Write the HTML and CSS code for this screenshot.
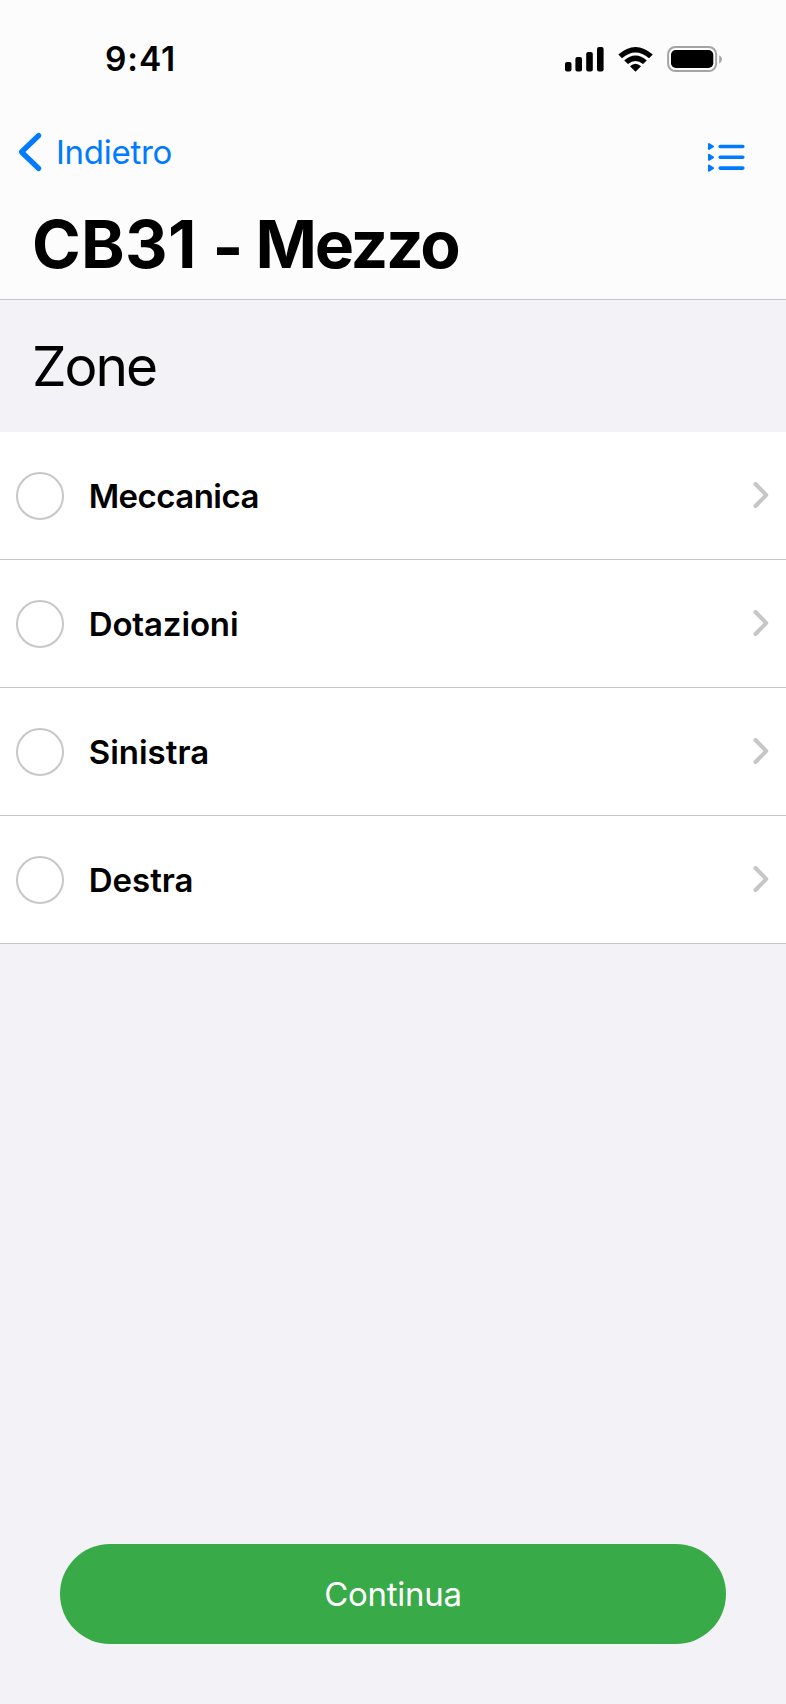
FILE: index.html
```html
<!DOCTYPE html>
<html lang="it">
<head>
<meta charset="utf-8">
<title>CB31 - Mezzo</title>
<link rel="stylesheet" href="styles.css">
</head>
<body>
<div class="screen">
  <header class="header">
    <div class="status">
      <span class="time">9:41</span>
      <svg class="indicators" width="160" height="28" viewBox="564 45 160 28">
        <rect x="565" y="62" width="6.5" height="9.5" rx="2"/>
        <rect x="575.4" y="57" width="6.6" height="14.5" rx="2"/>
        <rect x="586.2" y="52" width="6.6" height="19.5" rx="2"/>
        <rect x="597" y="47" width="6.6" height="24.5" rx="2"/>
        <path d="M618.3 54.6Q635.5 39.4 652.8 54.6L649 58.2Q635.5 46.6 622 58.2Z"/>
        <path d="M624.2 60.4Q635.5 50.4 646.8 60.4L643 64.1Q635.5 57.7 628 64.1Z"/>
        <path d="M630 66.3Q635.5 61.3 641 66.3L635.5 71.8Z"/>
        <rect class="battery-frame" x="668.1" y="46.9" width="48" height="24.2" rx="7.4"/>
        <rect x="671" y="50" width="42.3" height="18" rx="4.8"/>
        <path class="battery-tip" d="M719.2 55.2Q722 56.8 722 59.3T719.2 63.4Z"/>
      </svg>
    </div>
    <nav class="nav">
      <a class="back">
        <svg width="26" height="42" viewBox="0 0 26 42"><path d="M21.7 4.5L4.5 21L21.7 37.5"/></svg>
        <span class="back-label">Indietro</span>
      </a>
      <svg class="list-icon" width="37" height="30" viewBox="0 0 37 30">
        <path class="marks" d="M1 2L5 4.5L1 7ZM1 12.8L5 15.3L1 17.8ZM1 23.6L5 26.1L1 28.6Z"/>
        <path class="lines" d="M12.2 4.5H34.8M12.2 15.3H34.8M12.2 26.1H34.8"/>
      </svg>
    </nav>
    <h1 class="title"><span class="code">CB31</span> <span class="dash">-</span> <span class="kind">Mezzo</span></h1>
  </header>
  <main class="content">
    <h2 class="section-title">Zone</h2>
    <ul class="zones">
      <li class="zone"><span class="radio"></span><span class="label meccanica">Meccanica</span><svg class="chevron" width="18" height="28" viewBox="0 0 18 28"><path d="M3.5 3L14.2 14L3.5 25"/></svg></li>
      <li class="zone"><span class="radio"></span><span class="label dotazioni">Dotazioni</span><svg class="chevron" width="18" height="28" viewBox="0 0 18 28"><path d="M3.5 3L14.2 14L3.5 25"/></svg></li>
      <li class="zone"><span class="radio"></span><span class="label">Sinistra</span><svg class="chevron" width="18" height="28" viewBox="0 0 18 28"><path d="M3.5 3L14.2 14L3.5 25"/></svg></li>
      <li class="zone"><span class="radio"></span><span class="label">Destra</span><svg class="chevron" width="18" height="28" viewBox="0 0 18 28"><path d="M3.5 3L14.2 14L3.5 25"/></svg></li>
    </ul>
  </main>
  <footer class="footer"><button class="continue">Continua</button></footer>
</div>
</body>
</html>
```
FILE: styles.css
```css
* { box-sizing: border-box; }
body { margin: 0; font-family: Inter, "Liberation Sans", sans-serif; color: #000; }
.screen { width: 786px; height: 1704px; display: flex; flex-direction: column; background: #f2f2f7; }
.header { height: 300px; background: #fcfcfc; border-bottom: 1px solid #c6c6c8; }
.status { height: 118px; padding: 0 62px 0 105px; display: flex; align-items: center; justify-content: space-between; }
.time { font-size: 33.5px; font-weight: 600; line-height: 40px; letter-spacing: 0.9px; }
.battery-frame { fill: none; stroke: #a4a4a4; stroke-width: 2; }
.battery-tip { fill: #a4a4a4; }
.nav { height: 68px; padding: 0 41px 0 17px; display: flex; align-items: center; justify-content: space-between; }
.back { display: flex; align-items: center; gap: 13px; color: #007aff; }
.back svg { fill: none; stroke: #007aff; stroke-width: 5.2; stroke-linecap: round; stroke-linejoin: round; }
.back-label { font-size: 33px; line-height: 40px; letter-spacing: -0.27px; }
.list-icon { margin-top: 10px; }
.marks { fill: #007aff; stroke: #007aff; stroke-width: 2; stroke-linejoin: round; }
.lines { fill: none; stroke: #007aff; stroke-width: 3.6; stroke-linecap: round; }
.title { margin: 18px 0 0 32px; height: 80px; font-size: 66px; line-height: 80px; font-weight: 700; white-space: nowrap; }
.code { letter-spacing: 0.3px; }
.dash { display: inline-block; line-height: 1; vertical-align: -3px; margin-right: -3.5px; }
.kind { letter-spacing: -2.2px; }
.content { flex: 1; }
.section-title { margin: 0; height: 132px; padding: 0 32px; font-size: 55px; line-height: 132px; font-weight: 400; letter-spacing: -2px; }
.zones { margin: 0; padding: 0; list-style: none; }
.zone { height: 128px; padding: 0 16px; display: flex; align-items: center; background: #fff; box-shadow: inset 0 -1px #c6c6c8; }
.radio { width: 48px; height: 48px; border: 2px solid #c7c7c7; border-radius: 50%; }
.label { flex: 1; margin-left: 24.7px; font-size: 33px; line-height: 40px; font-weight: 600; }
.meccanica { letter-spacing: -0.53px; }
.dotazioni { letter-spacing: -0.13px; }
.chevron { margin-bottom: 2px; fill: none; stroke: #c6c6c8; stroke-width: 4; stroke-linecap: round; stroke-linejoin: round; }
.footer { padding: 0 60px 60px; display: flex; }
.continue { flex: 1; height: 100px; padding: 0; border: 0; border-radius: 50px; background: #38aa48; color: #fff; font-family: inherit; font-size: 33px; line-height: 40px; letter-spacing: -0.27px; }
```
